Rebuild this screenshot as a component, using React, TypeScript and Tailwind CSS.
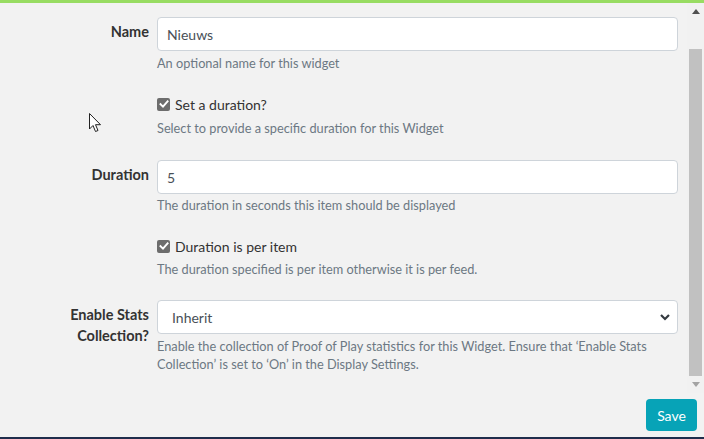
import React from "react";

function Check() {
  return (
    <span className="w-[13px] h-[13px] rounded-[2px] bg-[#6d6d6d] flex items-center justify-center shrink-0">
      <svg width="10" height="10" viewBox="0 0 10 10">
        <path d="M1.5 5.2 L4 7.6 L8.6 2.4" fill="none" stroke="white" strokeWidth="1.9" strokeLinecap="square" />
      </svg>
    </span>
  );
}

function Label({ children }: { children: React.ReactNode }) {
  return (
    <div className="w-[149px] shrink-0 pl-[50px] pr-0 text-right font-bold text-[14.5px] leading-[21px] text-[#333] pt-[4px]">
      {children}
    </div>
  );
}

function Help({ children, mt = "mt-[3px]" }: { children: React.ReactNode; mt?: string }) {
  return <div className={`${mt} text-[12.75px] leading-[18px] text-[#6c7883]`}>{children}</div>;
}

export default function App() {
  return (
    <div
      className="relative w-[704px] h-[439px] bg-[#f2f2f2] flex flex-col border-t-[3px] border-t-[#98dc62] border-b-2 border-b-[#1f2d4c] overflow-hidden"
      style={{ fontFamily: '"Segoe UI", Lato, "Noto Sans", sans-serif' }}
    >
      <div className="flex h-[390px]">
        <div className="flex-1 pt-[14px] pr-[9px] flex flex-col">
          {/* Name */}
          <div className="flex gap-[8px]">
            <Label>Name</Label>
            <div className="flex-1">
              <div className="h-[34px] bg-white border border-[#ced4da] rounded-[4px] px-[9px] flex items-center text-[14px] text-[#495057]">
                Nieuws
              </div>
              <Help>An optional name for this widget</Help>
            </div>
          </div>
          {/* Set a duration */}
          <div className="flex gap-[8px] mt-[22px]">
            <div className="w-[149px] shrink-0" />
            <div className="flex-1">
              <div className="flex items-center gap-[5px] h-[20px] text-[14px] text-[#333]">
                <Check />
                <span>Set a duration?</span>
              </div>
              <Help mt="mt-[5px]">Select to provide a specific duration for this Widget</Help>
            </div>
          </div>
          {/* Duration */}
          <div className="flex gap-[8px] mt-[23px]">
            <Label>Duration</Label>
            <div className="flex-1">
              <div className="h-[34px] bg-white border border-[#ced4da] rounded-[4px] px-[9px] flex items-center text-[14px] text-[#495057]">
                5
              </div>
              <Help mt="mt-[2px]">The duration in seconds this item should be displayed</Help>
            </div>
          </div>
          {/* Duration is per item */}
          <div className="flex gap-[8px] mt-[22px]">
            <div className="w-[149px] shrink-0" />
            <div className="flex-1">
              <div className="flex items-center gap-[5px] h-[20px] text-[14px] text-[#333]">
                <Check />
                <span>Duration is per item</span>
              </div>
              <Help mt="mt-[4px]">The duration specified is per item otherwise it is per feed.</Help>
            </div>
          </div>
          {/* Enable stats */}
          <div className="flex gap-[8px] mt-[22px]">
            <Label>Enable Stats Collection?</Label>
            <div className="flex-1">
              <div className="h-[34px] bg-white border border-[#ced4da] rounded-[4px] pl-[14px] pr-[6px] flex items-center justify-between text-[14px] text-[#495057]">
                <span>Inherit</span>
                <svg width="12" height="12" viewBox="0 0 12 12">
                  <path d="M2 4 L6 8 L10 4" fill="none" stroke="#343a40" strokeWidth="2.2" />
                </svg>
              </div>
              <Help>
                Enable the collection of Proof of Play statistics for this Widget. Ensure that ‘Enable Stats
                <br />
                Collection’ is set to ‘On’ in the Display Settings.
              </Help>
            </div>
          </div>
        </div>
        {/* scrollbar */}
        <div className="w-[17px] shrink-0 bg-[#f1f1f1] flex flex-col">
          <div className="h-[17px] flex items-center justify-center">
            <svg width="8" height="5" viewBox="0 0 8 5">
              <path d="M0 5 L4 0 L8 5 Z" fill="#505050" />
            </svg>
          </div>
          <div className="flex-1">
            <div className="mt-[29px] h-[327px] mx-[2px] bg-[#c1c1c1]" />
          </div>
          <div className="h-[17px] flex items-center justify-center">
            <svg width="8" height="5" viewBox="0 0 8 5">
              <path d="M0 0 L4 5 L8 0 Z" fill="#a3a3a3" />
            </svg>
          </div>
        </div>
      </div>
      <div className="flex-1 flex justify-end items-start pt-[6px] pr-[7px]">
        <button className="w-[51px] h-[32px] rounded-[4px] bg-[#07a3b7] text-white text-[14px] flex items-center justify-center">
          Save
        </button>
      </div>
      {/* mouse cursor */}
      <svg className="absolute left-[89px] top-[110px]" width="13" height="20" viewBox="0 0 13 20">
        <path d="M0.5 0.5 L0.5 16 L4 12.5 L6.5 18.5 L9 17.5 L6.5 11.7 L11.5 11.7 Z" fill="white" stroke="#222" strokeWidth="1" strokeLinejoin="miter" />
      </svg>
    </div>
  );
}
